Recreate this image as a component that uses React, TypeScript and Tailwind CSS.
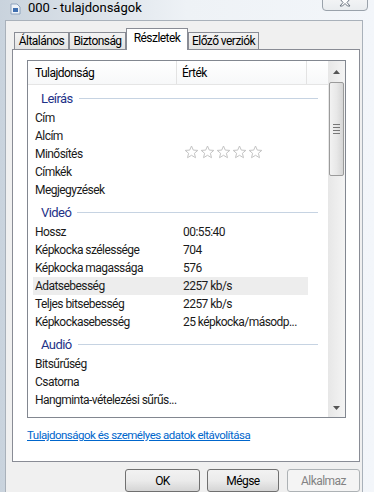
import React from "react"

type Item = {
  section?: boolean
  label: string
  value?: string
  stars?: boolean
  hl?: boolean
}

const items: Item[] = [
  { section: true, label: "Leírás" },
  { label: "Cím" },
  { label: "Alcím" },
  { label: "Minősítés", stars: true },
  { label: "Címkék" },
  { label: "Megjegyzések" },
  { section: true, label: "Videó" },
  { label: "Hossz", value: "00:55:40" },
  { label: "Képkocka szélessége", value: "704" },
  { label: "Képkocka magassága", value: "576" },
  { label: "Adatsebesség", value: "2257 kb/s", hl: true },
  { label: "Teljes bitsebesség", value: "2257 kb/s" },
  { label: "Képkockasebesség", value: "25 képkocka/másodp..." },
  { section: true, label: "Audió" },
  { label: "Bitsűrűség" },
  { label: "Csatorna" },
  { label: "Hangminta-vételezési sűrűs..." },
  { section: true, label: "Média" },
]

function Star() {
  return (
    <svg width="15" height="14" viewBox="0 0 15 14" className="shrink-0">
      <path
        d="M7.5 1 L9.3 5.1 L13.8 5.4 L10.4 8.3 L11.5 12.7 L7.5 10.3 L3.5 12.7 L4.6 8.3 L1.2 5.4 L5.7 5.1 Z"
        fill="#fff"
        stroke="#c4c4c4"
        strokeWidth="1"
        strokeLinejoin="round"
      />
    </svg>
  )
}

function Tab({ label, width, active }: { label: string; width: number; active?: boolean }) {
  if (active) {
    return (
      <div
        className="relative z-10 -mb-px flex h-[22px] items-start justify-center whitespace-nowrap border border-b-0 border-[#898c95] bg-white pt-[3px] text-black"
        style={{ width }}
      >
        {label}
      </div>
    )
  }
  return (
    <div
      className="flex h-[17px] items-center justify-center whitespace-nowrap border border-b-0 border-[#898c95] bg-gradient-to-b from-[#f3f3f3] to-[#e3e3e3] text-black"
      style={{ width }}
    >
      {label}
    </div>
  )
}

function Scrollbar() {
  return (
    <div className="flex w-[17px] flex-col bg-gradient-to-r from-[#e7e7e7] to-[#f4f4f4]">
      <div className="flex h-[21px] items-center justify-center">
        <svg width="7" height="4" viewBox="0 0 7 4">
          <path d="M0 4 L3.5 0 L7 4 Z" fill="#555" />
        </svg>
      </div>
      <div className="mx-px flex h-[94px] items-center justify-center rounded-[2px] border border-[#9b9b9b] bg-gradient-to-r from-[#f2f2f2] via-[#e8e8e8] to-[#d6d6d6]">
        <div className="flex flex-col gap-[2px]">
          <div className="h-px w-[7px] bg-[#777]" />
          <div className="h-px w-[7px] bg-[#777]" />
          <div className="h-px w-[7px] bg-[#777]" />
          <div className="h-px w-[7px] bg-[#777]" />
        </div>
      </div>
      <div className="flex-1" />
      <div className="flex h-[19px] items-center justify-center">
        <svg width="7" height="4" viewBox="0 0 7 4">
          <path d="M0 0 L3.5 4 L7 0 Z" fill="#555" />
        </svg>
      </div>
    </div>
  )
}

function Button({ label, width, disabled }: { label: string; width: number; disabled?: boolean }) {
  return (
    <div
      className={
        disabled
          ? "flex h-[23px] items-center justify-center rounded-[3px] border border-[#adb2b5] bg-[#f4f4f4] text-[#838383]"
          : "flex h-[23px] items-center justify-center rounded-[3px] border border-[#707070] bg-gradient-to-b from-[#f2f2f2] via-[#ebebeb] to-[#d5d5d5] text-black"
      }
      style={{ width }}
    >
      {label}
    </div>
  )
}

export default function App() {
  return (
    <div className="relative h-[492px] w-[374px] overflow-hidden bg-gradient-to-r from-[#c9d3dd] via-[#eef2f6] to-[#f3f6fa] font-[Roboto,'Liberation_Sans',sans-serif] text-[12px] leading-none tracking-[-0.55px] text-black">
      {/* Title bar */}
      <div className="flex h-[20px] items-start gap-[7px] pl-[10px] pt-[1px]">
        <svg width="11" height="12" viewBox="0 0 11 12" className="mt-[2px]">
          <path d="M1 1 H7 L10 4 V11 H1 Z" fill="#eef3f9" stroke="#8ea3bd" strokeWidth="1" />
          <rect x="3" y="5" width="5" height="4" fill="#3f6fb0" />
        </svg>
        <span className="text-[13px] leading-[14px] tracking-normal text-black">000 - tulajdonságok</span>
      </div>

      {/* Close button */}
      <div className="absolute left-[322px] top-[-6px] flex h-[17px] w-[46px] items-end justify-center rounded-b-[4px] border border-[#9aa2ab] bg-gradient-to-b from-[#f6f7f8] to-[#e9ecef] pb-[3px]">
        <svg width="12" height="8" viewBox="0 0 12 8">
          <path d="M1 0 L4 3.5 L1 7 H3.5 L6 4.5 L8.5 7 H11 L8 3.5 L11 0" fill="#fff" stroke="#6b7480" strokeWidth="1" />
        </svg>
      </div>

      <div className="flex">
        <div className="w-[5px]" />
        {/* Client area */}
        <div className="flex h-[472px] w-[358px] flex-col border-l border-r border-t border-[#a9b1ba] bg-[#f0f0f0]">
          {/* Tabs */}
          <div className="mt-[7px] flex h-[21px] items-end pl-[8px]">
            <Tab label="Általános" width={55} />
            <Tab label="Biztonság" width={57} />
            <Tab label="Részletek" width={62} active />
            <Tab label="Előző verziók" width={71} />
          </div>

          {/* Panel */}
          <div className="ml-[6px] flex h-[413px] w-[348px] flex-col border border-[#898c95] bg-white pl-[14px] pt-[10px]">
            {/* List box */}
            <div className="flex h-[358px] w-[319px] border border-[#828790] bg-white">
              <div className="flex flex-1 flex-col overflow-hidden">
                {/* Header */}
                <div className="flex h-[24px] shrink-0 items-stretch border-b border-[#e5e5e5] bg-gradient-to-b from-white to-[#f7f8f9]">
                  <div className="flex w-[149px] items-center border-r border-[#e3e3e3] pl-[7px]">Tulajdonság</div>
                  <div className="flex w-[130px] items-center border-r border-[#e3e3e3] pl-[5px]">Érték</div>
                  <div className="flex-1" />
                </div>

                {items.map((it, i) =>
                  it.section ? (
                    <div key={i} className="flex h-[24px] shrink-0 items-center pl-[13px] pr-[10px] pt-[3px]">
                      <span className="text-[13px] text-[#1e3287]">{it.label}</span>
                      <div className="ml-[6px] h-px flex-1 bg-[#c6d3e2]" />
                    </div>
                  ) : (
                    <div
                      key={i}
                      className={
                        it.hl
                          ? "ml-[5px] flex h-[18px] w-[275px] shrink-0 items-center bg-[#ededed] pl-[2px] text-[#1a1a1a]"
                          : "ml-[5px] flex h-[18px] w-[275px] shrink-0 items-center pl-[2px] text-[#1a1a1a]"
                      }
                    >
                      <div className="w-[148px] shrink-0 whitespace-nowrap">{it.label}</div>
                      {it.stars ? (
                        <div className="mt-[-4px] flex gap-[1px] pl-[1px]">
                          <Star />
                          <Star />
                          <Star />
                          <Star />
                          <Star />
                        </div>
                      ) : (
                        <div className="whitespace-nowrap">{it.value}</div>
                      )}
                    </div>
                  )
                )}
              </div>
              <Scrollbar />
            </div>

            {/* Link */}
            <div className="mt-[12px] whitespace-nowrap text-[11.5px] tracking-[-0.5px] text-[#0066cc] underline">
              Tulajdonságok és személyes adatok eltávolítása
            </div>
          </div>

          {/* Buttons */}
          <div className="ml-[119px] mt-[7px] flex">
            <Button label="OK" width={75} />
            <div className="w-[7px]" />
            <Button label="Mégse" width={72} />
            <div className="w-[8px]" />
            <Button label="Alkalmaz" width={73} disabled />
          </div>
        </div>
      </div>
    </div>
  )
}
